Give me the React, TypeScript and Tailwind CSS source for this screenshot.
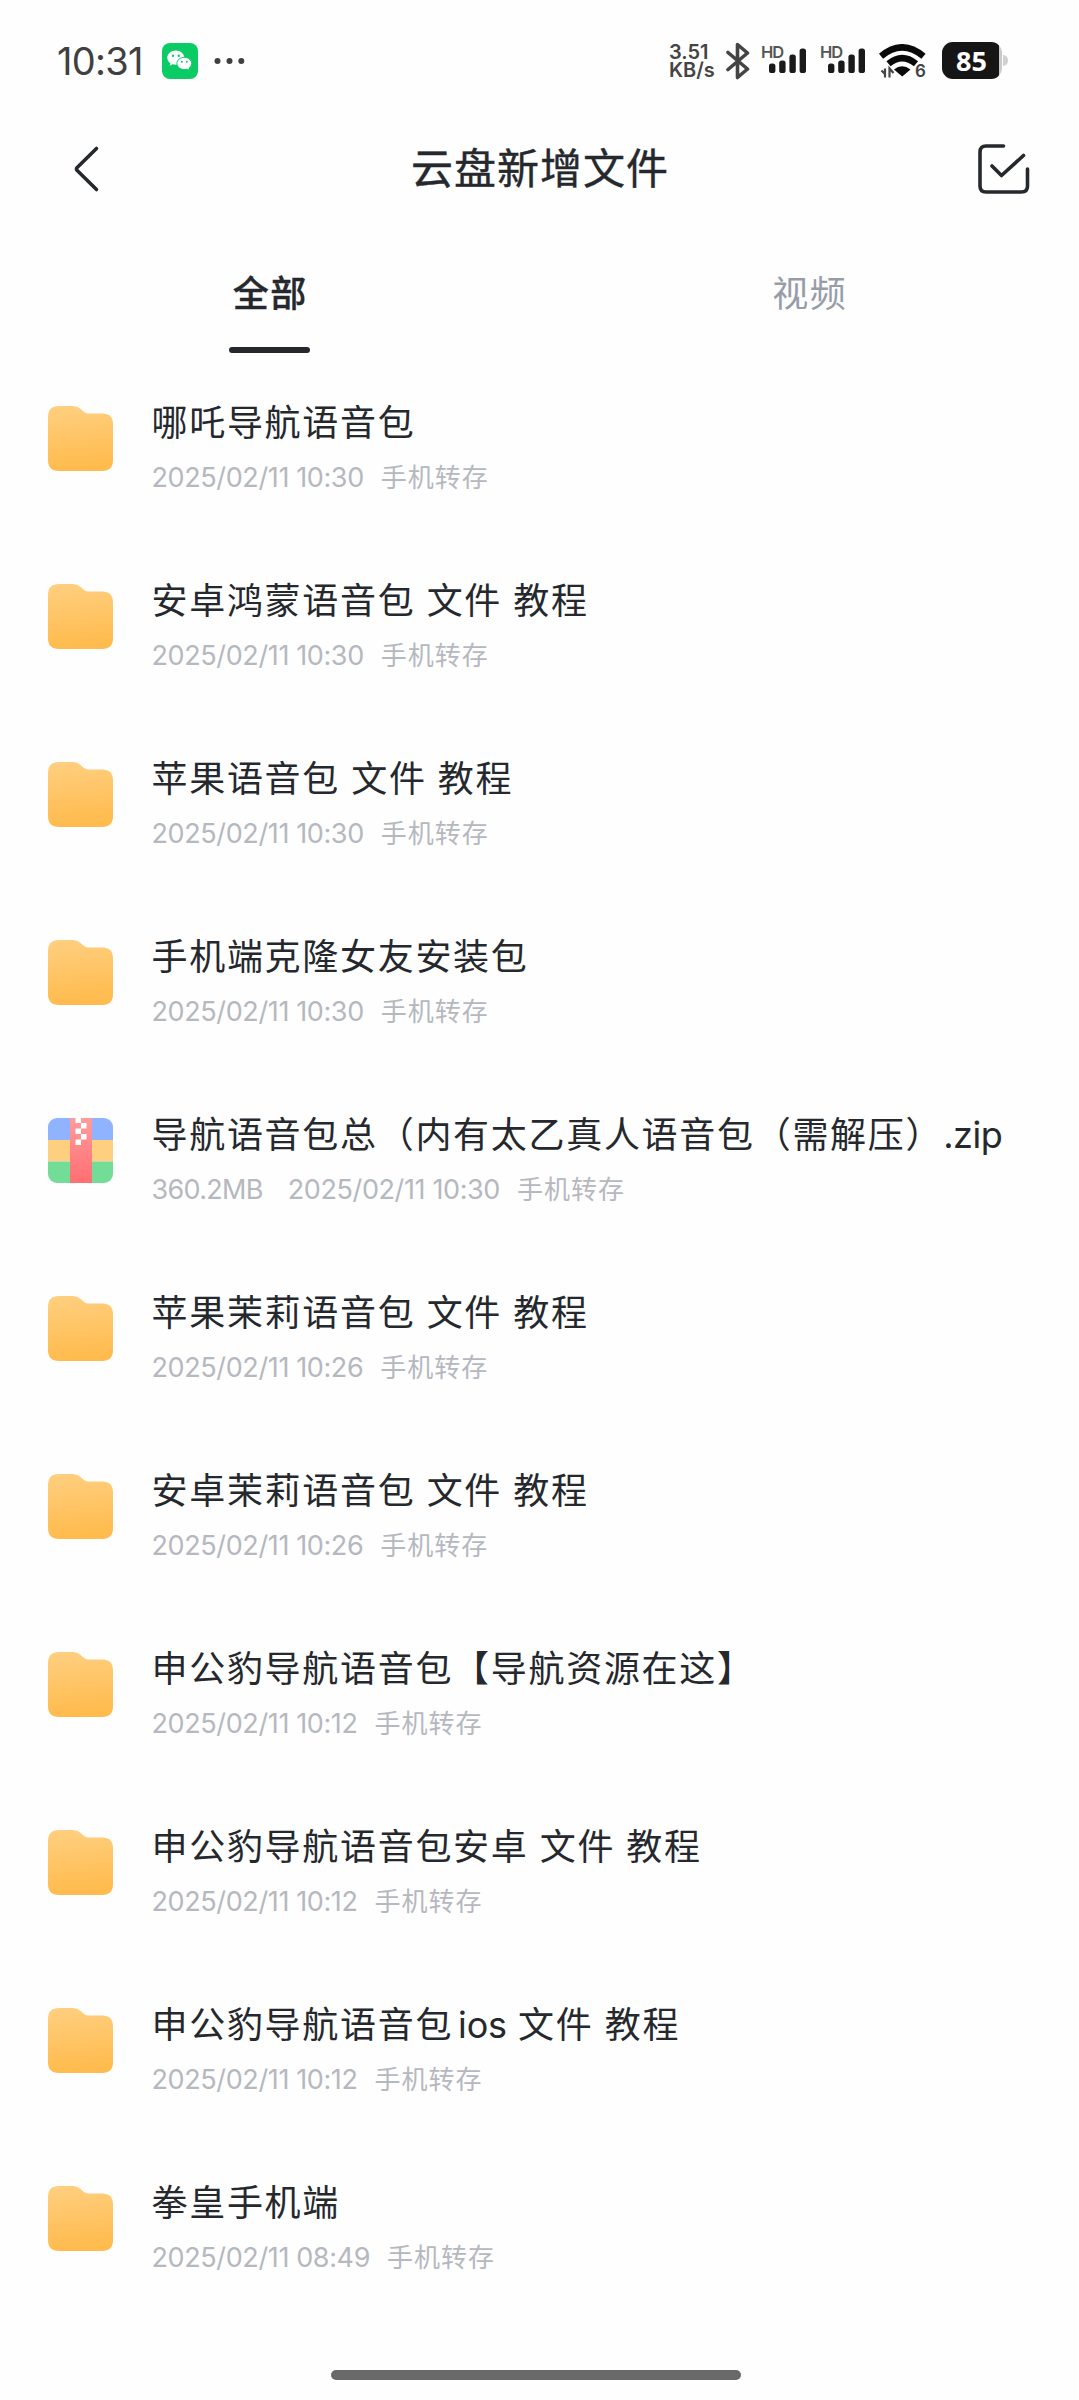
import React from "react";

type FileItem = {
  name: string;
  latin?: string;
  rest?: string;
  time: string;
  size?: string;
  type: "folder" | "zip";
};

const files: FileItem[] = [
  { name: "哪吒导航语音包", time: "2025/02/11 10:30", type: "folder" },
  { name: "安卓鸿蒙语音包 文件 教程", time: "2025/02/11 10:30", type: "folder" },
  { name: "苹果语音包 文件 教程", time: "2025/02/11 10:30", type: "folder" },
  { name: "手机端克隆女友安装包", time: "2025/02/11 10:30", type: "folder" },
  { name: "导航语音包总（内有太乙真人语音包（需解压）", latin: ".zip", time: "2025/02/11 10:30", size: "360.2MB", type: "zip" },
  { name: "苹果茉莉语音包 文件 教程", time: "2025/02/11 10:26", type: "folder" },
  { name: "安卓茉莉语音包 文件 教程", time: "2025/02/11 10:26", type: "folder" },
  { name: "申公豹导航语音包【导航资源在这】", time: "2025/02/11 10:12", type: "folder" },
  { name: "申公豹导航语音包安卓 文件 教程", time: "2025/02/11 10:12", type: "folder" },
  { name: "申公豹导航语音包", latin: "ios", rest: " 文件 教程", time: "2025/02/11 10:12", type: "folder" },
  { name: "拳皇手机端", time: "2025/02/11 08:49", type: "folder" },
];

const FolderIcon = () => (
  <svg width="65" height="65" viewBox="0 0 65 65" className="block">
    <defs>
      <linearGradient id="folder" x1="0" y1="0" x2="0.1" y2="1">
        <stop offset="0" stopColor="#ffcf80" />
        <stop offset="1" stopColor="#ffbb4d" />
      </linearGradient>
    </defs>
    <path
      d="M11 0H25Q29 0 32 2.5L36 6Q38 7.5 41 7.5H54Q65 7.5 65 18.5V54Q65 65 54 65H11Q0 65 0 54V11Q0 0 11 0Z"
      fill="url(#folder)"
    />
  </svg>
);

const ZipIcon = () => (
  <svg width="65" height="65" viewBox="0 0 65 65" className="block">
    <defs>
      <clipPath id="zipShape">
        <rect width="65" height="65" rx="9" />
      </clipPath>
      <linearGradient id="zipBand" x1="0" y1="0" x2="0" y2="1">
        <stop offset="0" stopColor="#ff9c9c" />
        <stop offset="1" stopColor="#ff6e72" />
      </linearGradient>
    </defs>
    <g clipPath="url(#zipShape)">
      <rect width="65" height="22" fill="#8fb3ff" />
      <rect y="22" width="65" height="21.5" fill="#ffcf80" />
      <rect y="43.5" width="65" height="21.5" fill="#73dc97" />
      <rect x="22" width="22" height="65" fill="url(#zipBand)" />
      <path
        d="M27.5 0h5.5v5h-5.5zM33 5h5.5v5.5h-5.5zM27.5 10.5h5.5v5.5h-5.5zM33 16h5.5v5.5h-5.5zM27.5 21.5h5.5v5.5h-5.5z"
        fill="#fff"
      />
    </g>
  </svg>
);

const Signal = () => (
  <div className="flex h-[30px] w-[48px]">
    <span className="-mt-px h-4 text-[16.5px] leading-4 font-semibold tracking-[-1px] text-[#555]">HD</span>
    <svg width="38" height="26" viewBox="0 0 38 26" className="mt-[3px] -ml-[14px] shrink-0" fill="#1a1a1a">
      <rect x="0" y="15.5" width="6.4" height="9.5" rx="2.6" />
      <rect x="10.2" y="12.5" width="6.4" height="12.5" rx="2.6" />
      <rect x="20.4" y="6.5" width="6.4" height="18.5" rx="2.6" />
      <rect x="30.6" y="0.5" width="6.4" height="24.5" rx="2.6" />
    </svg>
  </div>
);

const StatusBar = () => (
  <div className="flex h-[120px] items-start pt-[40px] pl-[57px]">
    <div className="w-[105px] text-[38px] leading-[43px] tracking-[-0.7px] text-[#404040]">10:31</div>
    <svg width="36" height="36" viewBox="0 0 36 36" className="mt-[3px]">
      <rect width="36" height="36" rx="8" fill="#0bcb64" />
      <path d="M13.8 7.5c-4.7 0-8.5 3.2-8.5 7.2 0 2.2 1.2 4.2 3.1 5.5l-.8 2.5 3-1.5c1 .3 2.1.5 3.2.5 4.7 0 8.5-3.1 8.5-7s-3.8-7.2-8.5-7.2z" fill="#fff" />
      <path d="M22.3 14.3c4.1 0 7.4 2.8 7.4 6.2 0 1.9-1 3.5-2.6 4.7l.6 2.2-2.5-1.3c-.9.3-1.9.4-2.9.4-4.1 0-7.4-2.6-7.4-6s3.3-6.2 7.4-6.2z" fill="#fff" stroke="#0bcb64" strokeWidth="1" />
      <g fill="#0bcb64">
        <circle cx="11" cy="12.7" r="1.2" />
        <circle cx="16.8" cy="12.7" r="1.2" />
        <circle cx="19.9" cy="18.7" r="1" />
        <circle cx="24.8" cy="18.7" r="1" />
      </g>
    </svg>
    <svg width="32" height="8" viewBox="0 0 32 8" className="mt-[17px] ml-[16px]" fill="#404040">
      <circle cx="3.5" cy="4" r="3" />
      <circle cx="15.5" cy="4" r="3" />
      <circle cx="27.3" cy="4" r="3" />
    </svg>

    {/* network speed */}
    <div className="mt-[3px] ml-[423px] w-[57px] text-[20px] leading-[18px] font-semibold text-[#444]">
      3.51
      <br />
      KB/s
    </div>
    <svg width="24" height="38" viewBox="0 0 24 38" className="mt-[2px]" fill="none" stroke="#444" strokeWidth="3.6" strokeLinejoin="round" strokeLinecap="round">
      <path d="M2 10.5L21.5 27L11.5 35.5V2.5L21.5 11L2 27.5" />
    </svg>
    <div className="mt-[5px] ml-[11px] flex gap-[11px]">
      <Signal />
      <Signal />
    </div>
    <div className="mt-[4px] ml-[11px] flex w-[47px]">
      <svg width="47" height="34" viewBox="0 0 47 34" className="shrink-0" fill="none" stroke="#0a0a0a">
        <path d="M2 12.2Q23 -5.500 44.500 12.200" strokeWidth="6.5" />
        <path d="M9.500 19.800Q23 8.500 37 19.800" strokeWidth="6.500" />
        <path d="M15 25.500Q23 19 31.500 25.500L23.200 32.500Z" fill="#0a0a0a" stroke="none" />
        <path d="M2.500 26.500L6 30M6 24.500V33.500M10.500 33.500V24.500L14.500 29" stroke="#444" strokeWidth="2.200" />
      </svg>
      <span className="mt-[18px] -ml-[11px] text-[17px] leading-[18px] font-semibold text-[#444]">6</span>
    </div>
    <div className="mt-[2px] ml-[16px] flex h-[37px] w-[60px] overflow-hidden rounded-[11px] bg-[#c9c9c9]">
      <div className="flex w-[57px] items-center justify-center rounded-r-[4px] bg-[#161616] pl-[2px] font-['Noto_Sans'] text-[27px] leading-none font-bold text-white">
        85
      </div>
    </div>
    <div className="mt-[15px] ml-[1px] h-[11px] w-[5px] rounded-r-full bg-[#d0d0d0]" />
  </div>
);

const Header = () => (
  <div className="flex h-[98px] items-center justify-between pr-[49px] pl-[71px]">
    <svg width="52" height="48" viewBox="0 0 52 48" fill="none" stroke="#25282d" strokeWidth="3.6" strokeLinecap="round" strokeLinejoin="round">
      <path d="M25.500 3.500L6.200 22.500Q4.700 24 6.200 25.500L25.500 44.500" />
    </svg>
    <h1 className="pr-[21px] text-[42px] leading-[60px] tracking-[1px] text-[#25282d] [-webkit-text-stroke:0.4px_#25282d]">
      云盘新增文件
    </h1>
    <svg width="52" height="50" viewBox="0 0 52 50" fill="none" stroke="#25282d" strokeWidth="3.6" strokeLinecap="round" strokeLinejoin="round">
      <path d="M25.5 2H8Q2 2 2 8V42Q2 48 8 48H43.5Q49.5 48 49.5 42V25" />
      <path d="M14 22L23.500 31.500L45.500 11.500" />
    </svg>
  </div>
);

const Tabs = () => (
  <div className="flex h-[164px] text-[36px] leading-[52px] tracking-[1.4px]">
    <div className="flex flex-1 flex-col items-center pt-[50px]">
      <span className="pl-px font-medium text-[#25282d] [-webkit-text-stroke:0.4px_#25282d]">全部</span>
      <span className="mt-[27px] h-[6px] w-[81px] rounded-full bg-[#25282d]" />
    </div>
    <div className="flex flex-1 flex-col items-center pt-[50px]">
      <span className="pl-px text-[#979da8]">视频</span>
    </div>
  </div>
);

const FileRow = ({ file }: { file: FileItem }) => (
  <div className="flex h-[178px] pl-[48px]">
    <div className="mt-[24px] w-[103.5px] shrink-0">{file.type === "zip" ? <ZipIcon /> : <FolderIcon />}</div>
    <div className="whitespace-nowrap">
      <div className="mt-[15px] text-[36px] leading-[52px] tracking-[1.7px] text-[#25282d] [word-spacing:-0.6px]">
        {file.name}
        {file.latin && <span className={file.type === "zip" ? "tracking-[-0.5px]" : "ml-[5px] tracking-[-0.2px]"}>{file.latin}</span>}
        {file.rest}
      </div>
      <div className="mt-[9px] flex text-[27px] leading-[40px] tracking-[-0.38px] text-[#b5b8be]">
        {file.size && <span className="mr-[25px] tracking-[-0.7px]">{file.size}</span>}
        <span>{file.time}</span>
        <span className="ml-[17px] text-[26px] tracking-[1px]">手机转存</span>
      </div>
    </div>
  </div>
);

const App = () => {
  return (
    <div className="flex h-[2400px] w-[1079px] flex-col overflow-hidden bg-[#fefefe] font-['Inter','Noto_Sans_CJK_SC',sans-serif]">
      <StatusBar />
      <Header />
      <Tabs />
      <div className="flex-1">
        {files.map((file) => (
          <FileRow key={file.time + file.name} file={file} />
        ))}
      </div>
      {/* home indicator */}
      <div className="mb-[20px] ml-[331px] h-[10px] w-[410px] shrink-0 rounded-full bg-[#696969]" />
    </div>
  );
};

export default App;
